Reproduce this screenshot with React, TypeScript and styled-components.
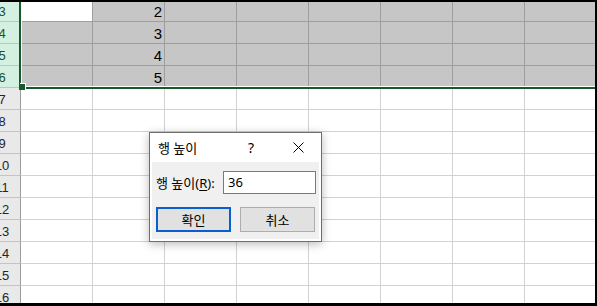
import React from 'react';
import styled, { createGlobalStyle } from 'styled-components';

const GlobalStyle = createGlobalStyle`
  body {
    margin: 0;
    background: #fff;
  }
`;

const GREEN = '#17592a';
const UI_FONT = `"Noto Sans", "Noto Sans CJK KR", sans-serif`;

const Frame = styled.div`
  position: relative;
  width: 597px;
  height: 306px;
  box-sizing: border-box;
  border-top: 2px solid #000;
  border-right: 2px solid #000;
  border-bottom: 3px solid #000;
  overflow: hidden;
  background: #fff;
`;

const Sheet = styled.div`
  margin: -2px 0 0 -16px;
  display: flex;
  flex-direction: column;
`;

const Row = styled.div`
  display: flex;
`;

const RowHeader = styled.div<{ $sel: boolean }>`
  flex: none;
  width: 37px;
  height: 22px;
  box-sizing: border-box;
  border-right: 1px solid #9c9c9c;
  border-bottom: 1px solid ${p => (p.$sel ? '#a6d3ba' : '#c4c4c4')};
  background: ${p => (p.$sel ? '#d3f0e0' : '#e9e9e9')};
  color: ${p => (p.$sel ? '#1d4f2e' : '#262626')};
  font: 13px/23px "Liberation Sans", Arial, sans-serif;
  text-align: center;
`;

const Cell = styled.div<{ $range: boolean; $active: boolean }>`
  flex: none;
  width: 72px;
  height: 22px;
  box-sizing: border-box;
  padding-right: 2px;
  border-right: 1px solid ${p => (p.$range ? '#9e9e9e' : '#d2d2d2')};
  border-bottom: 1px solid ${p => (p.$range ? '#9e9e9e' : '#d2d2d2')};
  background: ${p => (p.$range && !p.$active ? '#c6c6c6' : '#fff')};
  color: #000;
  font: 15px/23px "Liberation Sans", Arial, sans-serif;
  text-align: right;
  overflow: hidden;
`;

const SelectionOutline = styled.div`
  position: absolute;
  left: 19px;
  top: -10px;
  width: 700px;
  height: 97px;
  box-sizing: border-box;
  border-left: 2px solid ${GREEN};
  border-bottom: 2px solid ${GREEN};
  box-shadow: inset 1px -1px 0 #fff;
  pointer-events: none;
`;

const FillHandle = styled.div`
  position: absolute;
  left: 19px;
  top: 82px;
  width: 6px;
  height: 6px;
  background: ${GREEN};
  box-shadow: 1px -1px 0 #fff;
`;

const Dialog = styled.div`
  position: absolute;
  left: 149px;
  top: 130px;
  width: 173px;
  height: 110px;
  box-sizing: border-box;
  border: 1px solid #6e6e6e;
  padding: 0 2px 2px 2px;
  background: #fff;
  box-shadow: 0 2px 9px rgba(0, 0, 0, 0.28);
  display: flex;
  flex-direction: column;
  font-family: ${UI_FONT};
  color: #000;
`;

const TitleBar = styled.div`
  height: 29px;
  display: flex;
  align-items: center;
  padding-left: 6px;
`;

const Title = styled.div`
  flex: 1;
  font-size: 13px;
`;

const CaptionButton = styled.div<{ $w: number; $gap?: number }>`
  width: ${p => p.$w}px;
  margin-right: ${p => p.$gap ?? 0}px;
  height: 29px;
  display: flex;
  align-items: center;
  justify-content: center;
  font-size: 14px;
`;

const Body = styled.div`
  flex: 1;
  background: #f0f0f0;
  padding: 9px 3px 0 4px;
  display: flex;
  flex-direction: column;
  gap: 13px;
`;

const FieldRow = styled.div`
  display: flex;
  align-items: center;
  justify-content: space-between;
`;

const Label = styled.label`
  font-size: 13px;
  u {
    text-underline-offset: 2px;
  }
`;

const Input = styled.div`
  width: 93px;
  height: 23px;
  box-sizing: border-box;
  border: 1px solid #7a7a7a;
  background: #fff;
  padding-left: 4px;
  font-size: 13px;
  line-height: 21px;
`;

const ButtonRow = styled.div`
  display: flex;
  gap: 9px;
`;

const Button = styled.div<{ $primary?: boolean }>`
  width: 75px;
  height: 25px;
  box-sizing: border-box;
  border: ${p => (p.$primary ? '2px solid #0a5fd0' : '1px solid #adadad')};
  background: #e1e1e1;
  display: flex;
  align-items: center;
  justify-content: center;
  font-size: 13px;
`;

const ROWS = [3, 4, 5, 6, 7, 8, 9, 10, 11, 12, 13, 14, 15, 16];
const COLS = 8;
const VALUES: Record<number, string> = { 3: '2', 4: '3', 5: '4', 6: '5' };

export default function App (): React.ReactElement {
  return (
    <>
      <GlobalStyle />
      <Frame>
        <Sheet>
          {ROWS.map(r => {
            const sel = r >= 3 && r <= 6;
            return (
              <Row key={r}>
                <RowHeader $sel={sel}>{r}</RowHeader>
                {Array.from({ length: COLS }).map((_, c) => (
                  <Cell key={c} $range={sel} $active={r === 3 && c === 0}>
                    {c === 1 ? VALUES[r] : ''}
                  </Cell>
                ))}
              </Row>
            );
          })}
        </Sheet>
        <SelectionOutline />
        <FillHandle />
        <Dialog>
          <TitleBar>
            <Title>행 높이</Title>
            <CaptionButton $w={42} $gap={6}>?</CaptionButton>
            <CaptionButton $w={41}>
              <svg width="11" height="11" viewBox="0 0 11 11">
                <path d="M0.5 0.5L10.5 10.5M10.5 0.5L0.5 10.5" stroke="#000" strokeWidth="1" fill="none" />
              </svg>
            </CaptionButton>
          </TitleBar>
          <Body>
            <FieldRow>
              <Label>행 높이(<u>R</u>):</Label>
              <Input>36</Input>
            </FieldRow>
            <ButtonRow>
              <Button $primary>확인</Button>
              <Button>취소</Button>
            </ButtonRow>
          </Body>
        </Dialog>
      </Frame>
    </>
  );
}
